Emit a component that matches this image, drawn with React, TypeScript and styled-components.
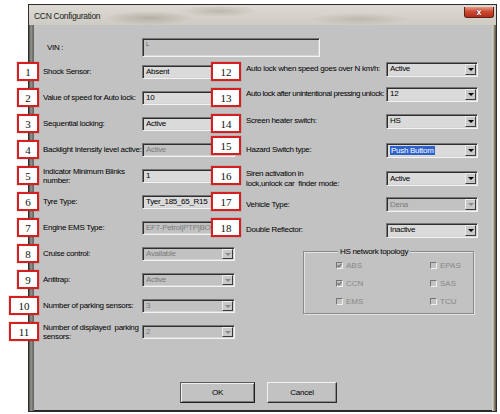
import type { ReactNode } from 'react';
import styled, { createGlobalStyle } from 'styled-components';

const FONT = `'Liberation Sans', Arial, sans-serif`;
const FACE = '#c2c2c2';

const GlobalStyle = createGlobalStyle`
  html, body {
    margin: 0;
    padding: 0;
    background: #ffffff;
  }
  body {
    font-family: ${FONT};
    font-size: 8px;
    letter-spacing: -0.3px;
    color: #000;
  }
  * {
    box-sizing: border-box;
  }
`;

const Stage = styled.div`
  width: 500px;
  height: 414px;
  padding: 4px 0 0 28px;
  overflow: hidden;
`;

const Window = styled.div`
  width: 469px;
  height: 408px;
  display: flex;
  flex-direction: column;
  border: 1px solid #2e2e2c;
  background:
    linear-gradient(90deg, #4a4a48 0, #979793 2px, #6a6a66 4px, #6a6a66 5px, transparent 5px),
    linear-gradient(270deg, #5c5446 0, #968e7e 2px, #d0d0cc 3px, #d0d0cc 4px, transparent 4px),
    #262624;
`;

const TitleBar = styled.div`
  height: 20px;
  flex: none;
  display: flex;
  align-items: center;
  padding: 0 2px 0 5px;
  background:
    radial-gradient(ellipse 45px 7px at 120px 13px, rgba(120, 116, 104, 0.35), transparent),
    radial-gradient(ellipse 40px 6px at 190px 6px, rgba(120, 116, 104, 0.3), transparent),
    radial-gradient(ellipse 50px 6px at 330px 14px, rgba(120, 116, 104, 0.25), transparent),
    linear-gradient(180deg, #dcdad2 0%, #cdcbc3 100%);
`;

const Title = styled.span`
  flex: 1;
  font-size: 8.5px;
  color: #1c1c1c;
  padding-top: 1px;
`;

const CloseButton = styled.span`
  align-self: flex-start;
  margin-top: 2px;
  width: 30px;
  height: 11px;
  border: 1px solid #5c2216;
  border-top: none;
  border-radius: 0 0 3px 3px;
  background: linear-gradient(180deg, #e59a84 0%, #cd4a33 45%, #b42c1a 100%);
  color: #fff;
  font-weight: bold;
  font-size: 9px;
  line-height: 10px;
  letter-spacing: 0;
  text-align: center;
  text-shadow: 0 0 2px #5c1a10;
`;

const Client = styled.div`
  flex: 1;
  margin: 0 4px 1px 5px;
  background: ${FACE};
  display: flex;
  flex-direction: column;
  padding-top: 13px;
`;

const VinRow = styled.div`
  display: flex;
  align-items: center;
  height: 19px;
  padding-left: 13px;
`;

const Body = styled.div`
  display: flex;
  align-items: flex-start;
`;

const LeftColumn = styled.div`
  width: 212px;
  margin-top: 2px;
  display: flex;
  flex-direction: column;
`;

const RightColumn = styled.div`
  display: flex;
  flex-direction: column;
`;

const Row = styled.div<{ $h?: number }>`
  position: relative;
  height: ${({ $h }) => $h ?? 26}px;
  display: flex;
  align-items: center;
  padding-left: ${({ $h }) => ($h ? 0 : 9)}px;
`;

const Label = styled.span<{ $w: number; $tight?: boolean }>`
  width: ${({ $w }) => $w}px;
  flex: none;
  line-height: 9.5px;
  white-space: nowrap;
  letter-spacing: ${({ $tight }) => ($tight ? '-0.45px' : '-0.3px')};
`;

const Box = styled.div<{ $w: number; $h: number; $disabled?: boolean }>`
  width: ${({ $w }) => $w}px;
  height: ${({ $h }) => $h}px;
  flex: none;
  display: flex;
  align-items: center;
  padding: 1px 1px 1px 3px;
  border: 1px solid;
  border-color: #767676 #f4f4f4 #f4f4f4 #767676;
  box-shadow: inset 1px 1px 0 #2e2e2e, inset -1px -1px 0 #d4d4d4;
  background: ${({ $disabled }) => ($disabled ? FACE : '#dadada')};
  color: ${({ $disabled }) => ($disabled ? '#7c7c7c' : '#000')};
  white-space: nowrap;
  overflow: hidden;
`;

const Value = styled.span`
  flex: 1;
  overflow: hidden;
  line-height: 10px;
`;

const VinMark = styled.span`
  align-self: flex-start;
  margin-top: 1px;
  font-size: 6px;
  color: #5a5a5a;
`;

const Selected = styled.span`
  background: #2d62cc;
  color: #fff;
  padding: 0 1px;
  line-height: 11px;
`;

const DropButton = styled.span<{ $disabled?: boolean }>`
  width: 11px;
  align-self: stretch;
  flex: none;
  background: #c9c9c9;
  border: 1px solid;
  border-color: #ededed #3a3a3a #3a3a3a #ededed;
  display: flex;
  align-items: center;
  justify-content: center;

  &::after {
    content: '';
    border-left: 3px solid transparent;
    border-right: 3px solid transparent;
    border-top: 3px solid ${({ $disabled }) => ($disabled ? '#8a8a8a' : '#000')};
  }
`;

const Badge = styled.span<{ $left: number; $w: number; $dy?: number }>`
  position: absolute;
  left: ${({ $left }) => $left}px;
  top: ${({ $dy }) => 3 + ($dy ?? 0)}px;
  width: ${({ $w }) => $w}px;
  height: 19px;
  z-index: 2;
  border: 2px solid #d61f1f;
  background: #fff;
  box-shadow: 0 0 1px rgba(80, 0, 0, 0.5);
  font-family: 'Liberation Serif', 'Times New Roman', serif;
  font-size: 11px;
  letter-spacing: 0;
  color: #111;
  display: flex;
  align-items: center;
  justify-content: center;
`;

const Group = styled.fieldset`
  margin: 4px 0 0 57px;
  width: 171px;
  height: 67px;
  padding: 0 0 0 32px;
  border: 1px solid #8a8a8a;
  box-shadow: 1px 1px 0 #e4e4e4, inset 1px 1px 0 #e4e4e4;
  display: grid;
  grid-template-columns: 94px auto;
  grid-template-rows: repeat(3, 18px);
  grid-auto-flow: column;
`;

const Legend = styled.legend`
  margin-left: 2px;
  padding: 0 2px;
  font-size: 8px;
  line-height: 9px;
  background: ${FACE};
`;

const CheckItem = styled.label`
  display: flex;
  align-items: center;
  gap: 3px;
  color: #878787;
  letter-spacing: 0;
`;

const CheckSquare = styled.span`
  width: 7px;
  height: 7px;
  border: 1px solid;
  border-color: #767676 #f0f0f0 #f0f0f0 #767676;
  background: ${FACE};
  display: flex;
  align-items: center;
  justify-content: center;
`;

const Footer = styled.div`
  margin-top: auto;
  display: flex;
  gap: 12px;
  padding: 0 0 7px 146px;
`;

const Button = styled.button<{ $w: number; $default?: boolean }>`
  width: ${({ $w }) => $w}px;
  height: 21px;
  padding: 0;
  font-family: ${FONT};
  font-size: 8px;
  letter-spacing: -0.2px;
  color: #000;
  background: ${FACE};
  border: 1px solid;
  border-color: ${({ $default }) => ($default ? '#5a5a5a #1e1e1e #1e1e1e #5a5a5a' : '#f2f2f2 #2c2c2c #2c2c2c #f2f2f2')};
  box-shadow: ${({ $default }) =>
    $default ? 'inset 1px 1px 0 #f0f0f0, inset -1px -1px 0 #7a7a7a' : 'inset -1px -1px 0 #8a8a8a'};
`;

type LeftItem = { n: number; label: ReactNode; value: string; disabled?: boolean; tag?: number; tagDy?: number };
type RightItem = { label: ReactNode; value: string; h: number; disabled?: boolean; selected?: boolean; tight?: boolean };

const leftRows: LeftItem[] = [
  { n: 1, label: 'Shock Sensor:', value: 'Absent', tag: 12 },
  { n: 2, label: 'Value of speed for Auto lock:', value: '10', tag: 13 },
  { n: 3, label: 'Sequential locking:', value: 'Active', tag: 14 },
  { n: 4, label: 'Backlight Intensity level active:', value: 'Active', disabled: true, tag: 15, tagDy: -4 },
  { n: 5, label: <>Indicator Minimum Blinks<br />number:</>, value: '1', tag: 16 },
  { n: 6, label: 'Tyre Type:', value: 'Tyer_185_65_R15', tag: 17 },
  { n: 7, label: 'Engine EMS Type:', value: 'EF7-Petrol|PTP|BOSCH', disabled: true, tag: 18 },
  { n: 8, label: 'Cruise control:', value: 'Available', disabled: true },
  { n: 9, label: 'Antitrap:', value: 'Active', disabled: true },
  { n: 10, label: 'Number of parking sensors:', value: '3', disabled: true },
  { n: 11, label: <>Number of displayed&nbsp; parking<br />sensors:</>, value: '2', disabled: true },
];

const rightRows: RightItem[] = [
  { label: 'Auto lock when speed goes over N km/h:', value: 'Active', h: 24 },
  { label: 'Auto lock after unintentional pressing unlock:', value: '12', h: 26, tight: true },
  { label: 'Screen heater switch:', value: 'HS', h: 28 },
  { label: 'Hazard Switch type:', value: 'Push Buttom', h: 30, selected: true },
  { label: <>Siren activation in<br />lock,unlock car&nbsp; finder mode:</>, value: 'Active', h: 27 },
  { label: 'Vehicle Type:', value: 'Dena', h: 25, disabled: true },
  { label: 'Double Reflector:', value: 'Inactive', h: 26 },
];

const topology = [
  { name: 'ABS', checked: true },
  { name: 'CCN', checked: true },
  { name: 'EMS', checked: false },
  { name: 'EPAS', checked: false },
  { name: 'SAS', checked: false },
  { name: 'TCU', checked: false },
];

function Combo({ value, w, h, disabled, selected }: { value: string; w: number; h: number; disabled?: boolean; selected?: boolean }) {
  return (
    <Box $w={w} $h={h} $disabled={disabled}>
      <Value>{selected ? <Selected>{value}</Selected> : value}</Value>
      <DropButton $disabled={disabled} />
    </Box>
  );
}

export default function App() {
  return (
    <>
      <GlobalStyle />
      <Stage>
        <Window>
          <TitleBar>
            <Title>CCN Configuration</Title>
            <CloseButton>x</CloseButton>
          </TitleBar>
          <Client>
            <VinRow>
              <Label $w={95}>VIN :</Label>
              <Box $w={178} $h={19} $disabled>
                <VinMark>L</VinMark>
              </Box>
            </VinRow>
            <Body>
              <LeftColumn>
                {leftRows.map((row) => (
                  <Row key={row.n}>
                    <Badge $left={row.n >= 10 ? -25 : -17} $w={row.n >= 10 ? 30 : 22}>{row.n}</Badge>
                    <Label $w={99}>{row.label}</Label>
                    <Combo value={row.value} w={93} h={14} disabled={row.disabled} />
                    {row.tag && <Badge $left={177} $w={30} $dy={row.tagDy}>{row.tag}</Badge>}
                  </Row>
                ))}
              </LeftColumn>
              <RightColumn>
                {rightRows.map((row, i) => (
                  <Row key={i} $h={row.h}>
                    <Label $w={140} $tight={row.tight}>{row.label}</Label>
                    <Combo value={row.value} w={92} h={15} disabled={row.disabled} selected={row.selected} />
                  </Row>
                ))}
                <Group>
                  <Legend>HS network topology</Legend>
                  {topology.map((item) => (
                    <CheckItem key={item.name}>
                      <CheckSquare>
                        {item.checked && (
                          <svg width="5" height="5" viewBox="0 0 5 5">
                            <polyline points="0.5,2.2 1.8,3.8 4.5,0.8" fill="none" stroke="#6e6e6e" strokeWidth="1.2" />
                          </svg>
                        )}
                      </CheckSquare>
                      {item.name}
                    </CheckItem>
                  ))}
                </Group>
              </RightColumn>
            </Body>
            <Footer>
              <Button $w={75} $default>OK</Button>
              <Button $w={70}>Cancel</Button>
            </Footer>
          </Client>
        </Window>
      </Stage>
    </>
  );
}
